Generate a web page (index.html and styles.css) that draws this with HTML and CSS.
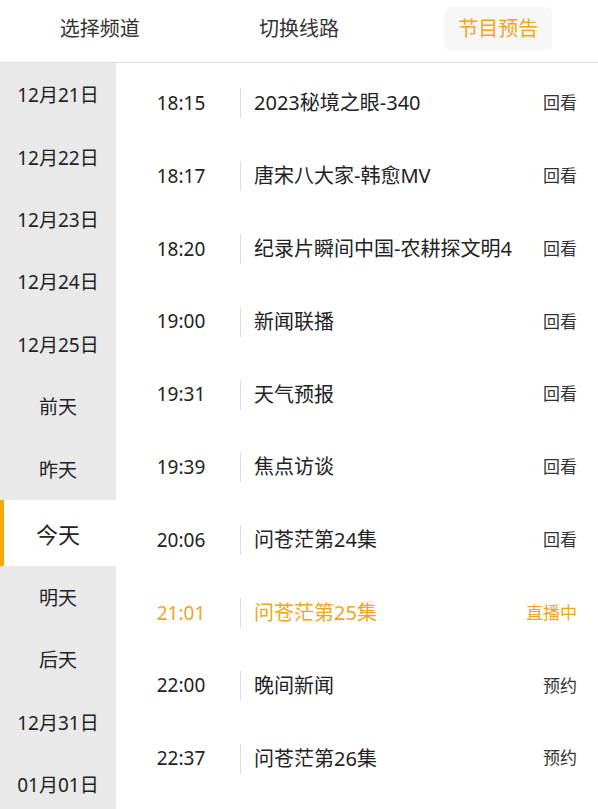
FILE: index.html
```html
<!DOCTYPE html>
<html lang="zh-CN">
<head>
    <meta charset="UTF-8">
    <meta name="viewport" content="width=device-width, initial-scale=1.0">
    <title>节目预告</title>
    <link rel="stylesheet" href="styles.css">
</head>
<body>
    <div class="tabs">
        <div class="tab"><span>选择频道</span></div>
        <div class="tab"><span>切换线路</span></div>
        <div class="tab active"><span>节目预告</span></div>
    </div>

    <div class="main">
        <ul class="days">
            <li>12月21日</li>
            <li>12月22日</li>
            <li>12月23日</li>
            <li>12月24日</li>
            <li>12月25日</li>
            <li>前天</li>
            <li>昨天</li>
            <li class="today">今天</li>
            <li>明天</li>
            <li>后天</li>
            <li>12月31日</li>
            <li>01月01日</li>
        </ul>

        <ul class="programs">
            <li class="row">
                <span class="time">18:15</span><span class="sep"></span>
                <span class="title">2023秘境之眼-340</span><span class="action">回看</span>
            </li>
            <li class="row">
                <span class="time">18:17</span><span class="sep"></span>
                <span class="title">唐宋八大家-韩愈MV</span><span class="action">回看</span>
            </li>
            <li class="row">
                <span class="time">18:20</span><span class="sep"></span>
                <span class="title">纪录片瞬间中国-农耕探文明4</span><span class="action">回看</span>
            </li>
            <li class="row">
                <span class="time">19:00</span><span class="sep"></span>
                <span class="title">新闻联播</span><span class="action">回看</span>
            </li>
            <li class="row">
                <span class="time">19:31</span><span class="sep"></span>
                <span class="title">天气预报</span><span class="action">回看</span>
            </li>
            <li class="row">
                <span class="time">19:39</span><span class="sep"></span>
                <span class="title">焦点访谈</span><span class="action">回看</span>
            </li>
            <li class="row">
                <span class="time">20:06</span><span class="sep"></span>
                <span class="title">问苍茫第24集</span><span class="action">回看</span>
            </li>
            <li class="row live">
                <span class="time">21:01</span><span class="sep"></span>
                <span class="title">问苍茫第25集</span><span class="action">直播中</span>
            </li>
            <li class="row">
                <span class="time">22:00</span><span class="sep"></span>
                <span class="title">晚间新闻</span><span class="action">预约</span>
            </li>
            <li class="row">
                <span class="time">22:37</span><span class="sep"></span>
                <span class="title">问苍茫第26集</span><span class="action">预约</span>
            </li>
        </ul>
    </div>
</body>
</html>
```

FILE: styles.css
```css
body {
    margin: 0;
    font-family: "Noto Sans", "Noto Sans CJK SC", sans-serif;
    color: #222;
    background-color: #fff;
    overflow: hidden;
}

ul {
    list-style: none;
    margin: 0;
    padding: 0;
}

.tabs {
    display: flex;
    height: 62px;
    border-bottom: 1px solid #dcdcdc;
}

.tab {
    flex: 1;
    display: flex;
    justify-content: center;
    align-items: center;
    font-size: 20px;
    line-height: 1;
    color: #333;
}

.tab span {
    padding: 12px 14px;
    border-radius: 7px;
    margin-top: -4px;
}

.tab.active span {
    background-color: #f7f7f7;
    color: #f3a31d;
}

.main {
    display: flex;
}

/* left date column */
.days {
    width: 116px;
    flex-shrink: 0;
    background-color: #e9e9e9;
}

.days li {
    height: 62.4px;
    display: flex;
    justify-content: center;
    align-items: center;
    font-size: 19px;
    color: #222;
}

.days li.today {
    height: 66px;
    background-color: #fff;
    font-size: 22px;
    border-left: 4px solid #ffa800;
    box-sizing: border-box;
    padding-right: 4px;
}

/* program list */
.programs {
    flex: 1;
    padding-top: 4px;
}

.row {
    height: 72.8px;
    display: flex;
    align-items: center;
    font-size: 20px;
    line-height: 1.2;
}

.time {
    width: 124px;
    box-sizing: border-box;
    padding-left: 6px;
    text-align: center;
    font-size: 19px;
}

.sep {
    width: 1px;
    height: 30px;
    background-color: #dedede;
}

.title {
    flex: 1;
    margin-left: 13px;
    white-space: nowrap;
}

.action {
    font-size: 17px;
    color: #333;
    padding-right: 21px;
}

.row.live .time,
.row.live .title,
.row.live .action {
    color: #f3a31d;
}
```
